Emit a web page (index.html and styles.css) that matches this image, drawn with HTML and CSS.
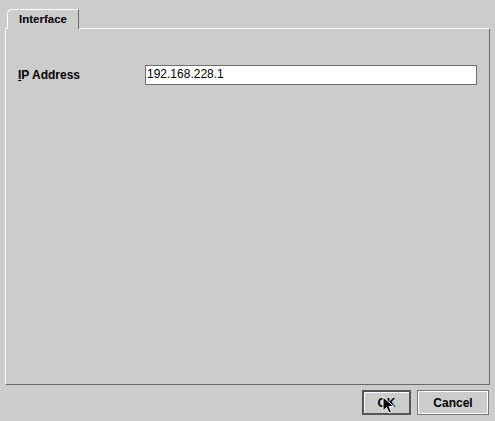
FILE: index.html
```html
<!DOCTYPE html>
<html>
<head>
<meta charset="utf-8">
<link rel="stylesheet" href="styles.css">
</head>
<body>
<div class="dialog">
  <div class="tabs">
    <div class="tab">Interface</div>
  </div>
  <div class="panel">
    <div class="row">
      <label class="label"><span class="mn">I</span>P Address</label>
      <div class="field">192.168.228.1</div>
    </div>
  </div>
  <div class="buttons">
    <button class="btn btn-default">OK
      <svg class="cursor" width="14" height="18" viewBox="0 0 14 18"><path d="M1 1 L1 15 L4.5 11.5 L7 17 L9.5 16 L7 10.5 L12 10.5 Z" fill="#000" stroke="#fff" stroke-width="1"/></svg>
    </button>
    <button class="btn">Cancel</button>
  </div>
</div>
</body>
</html>
```
FILE: styles.css
```css
html, body {
  margin: 0;
  padding: 0;
  background: #cccccc;
}
.dialog {
  width: 495px;
  height: 421px;
  box-sizing: border-box;
  padding: 9px 5px 0 5px;
  display: flex;
  flex-direction: column;
  font-family: "Liberation Sans", Arial, sans-serif;
  color: #000;
}
.tabs {
  display: flex;
  padding-left: 2px;
  height: 19px;
  position: relative;
  z-index: 1;
}
.tab {
  width: 72px;
  height: 20px;
  box-sizing: border-box;
  border-top: 1px solid #ffffff;
  border-left: 1px solid #ffffff;
  border-right: 1px solid #6a6a6a;
  border-top-left-radius: 5px;
  background: #cccccc;
  font-size: 11.5px;
  font-weight: bold;
  padding: 2px 0 0 11px;
  line-height: 14px;
}
.panel {
  height: 357px;
  box-sizing: border-box;
  border-top: 1px solid #ffffff;
  border-left: 1px solid #ffffff;
  border-right: 1px solid #6a6a6a;
  border-bottom: 1px solid #6a6a6a;
  padding: 36px 12px 0 12px;
}
.row {
  display: flex;
  align-items: center;
}
.label {
  width: 127px;
  font-size: 12px;
  font-weight: bold;
}
.mn {
  text-decoration: underline;
}
.field {
  width: 332px;
  height: 20px;
  box-sizing: border-box;
  background: #ffffff;
  border: 1px solid #6e6e6e;
  font-size: 12px;
  line-height: 17px;
  padding-left: 1px;
}
.buttons {
  display: flex;
  justify-content: flex-end;
  gap: 6px;
  padding: 5px 1px 0 0;
}
.btn {
  position: relative;
  height: 25px;
  box-sizing: border-box;
  background: #cccccc;
  border: 1px solid #777777;
  box-shadow: inset 1px 1px 0 #ffffff, inset -1px -1px 0 #ffffff;
  font-family: "Liberation Sans", Arial, sans-serif;
  font-size: 12px;
  font-weight: bold;
  color: #000;
  padding: 0;
  width: 72px;
}
.btn-default {
  width: 49px;
  border: 2px solid #555555;
  box-shadow: inset 1px 1px 0 #ffffff;
}
.cursor {
  position: absolute;
  left: 18px;
  top: 4px;
}
```
